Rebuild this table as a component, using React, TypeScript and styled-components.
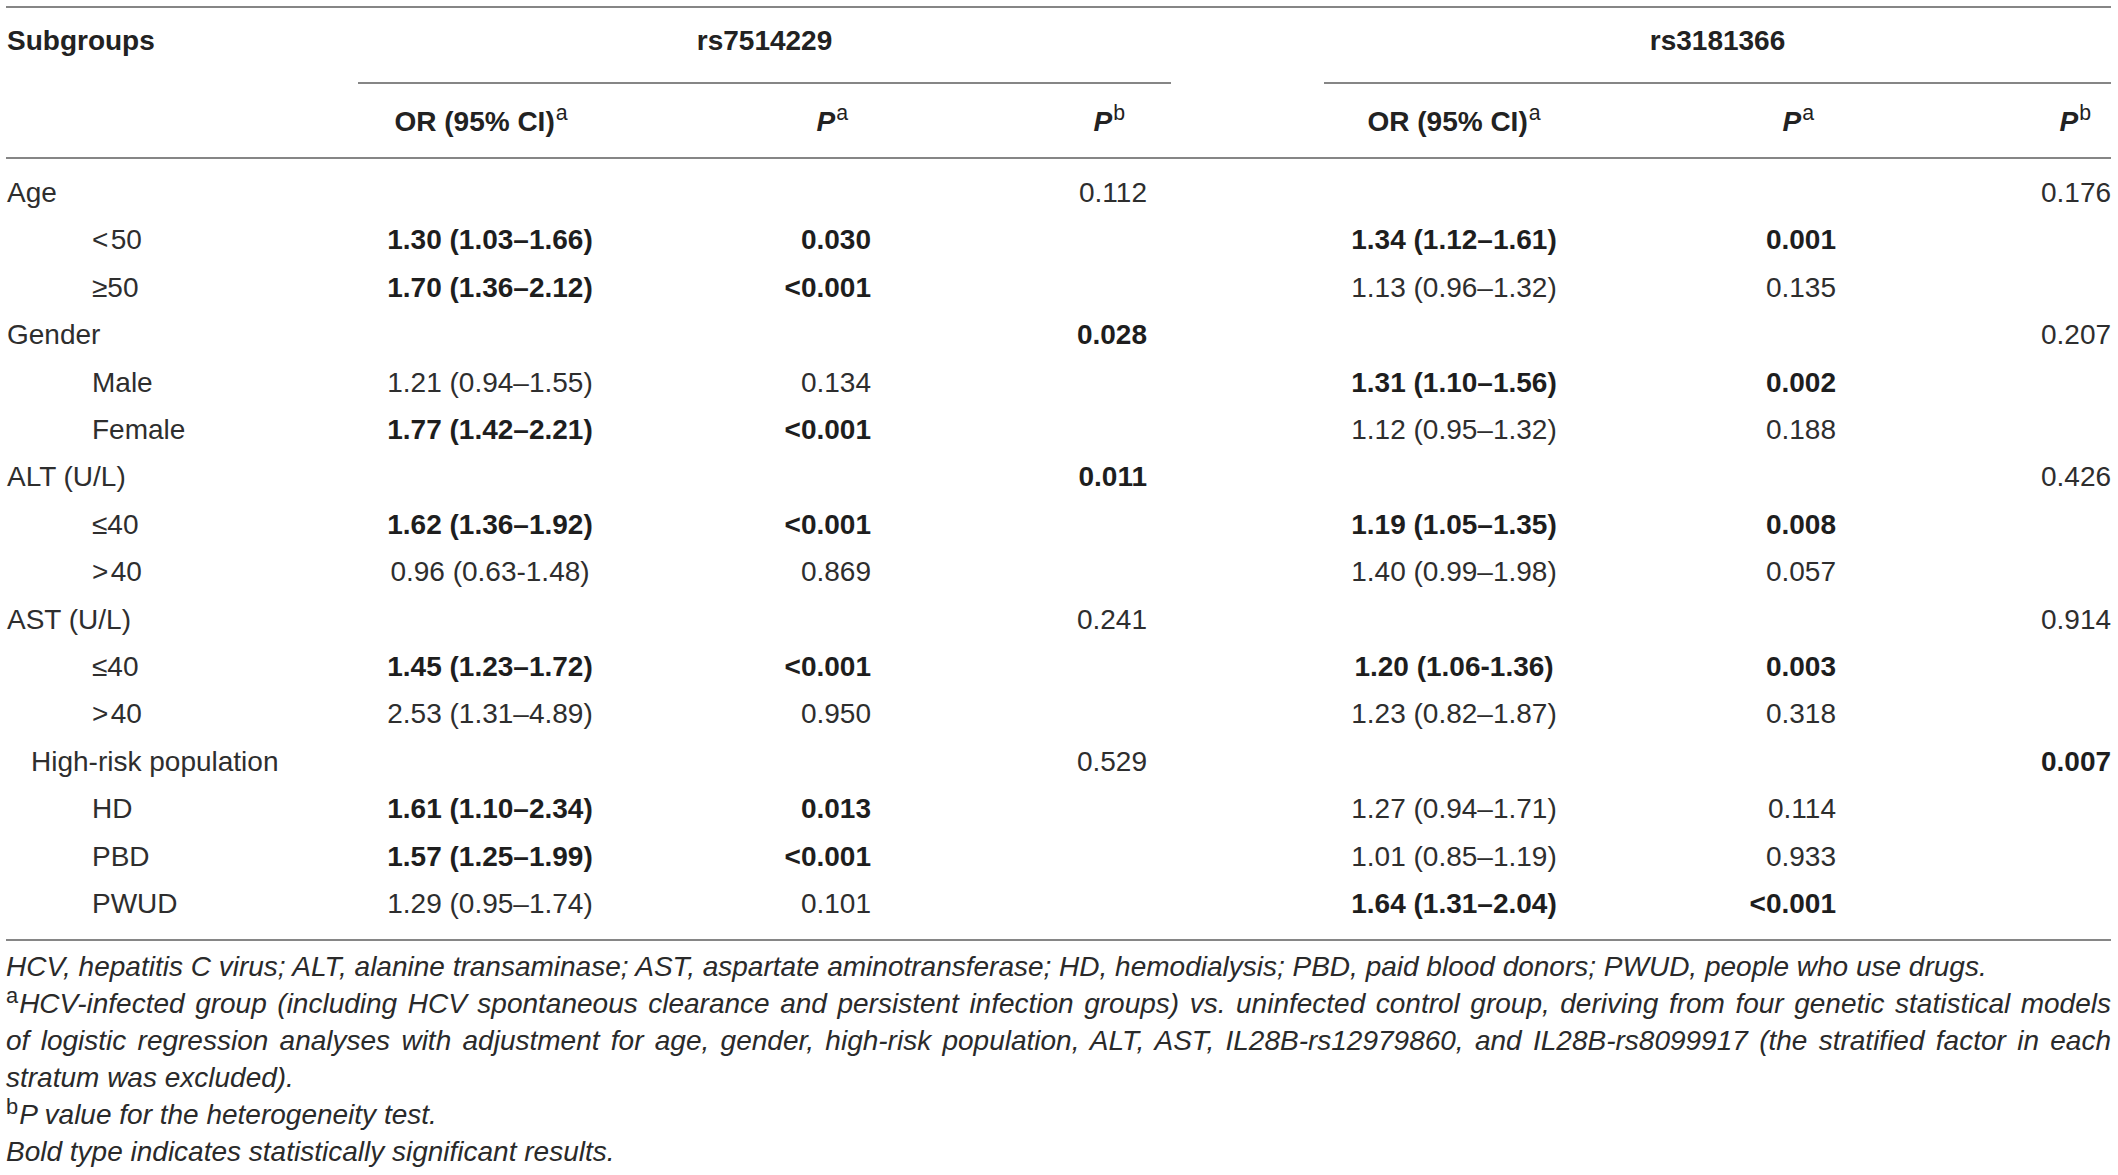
import React from "react";
import styled, { createGlobalStyle, css } from "styled-components";

const GlobalStyle = createGlobalStyle`
  html, body { margin: 0; padding: 0; background: #ffffff; }
  body { font-family: "Liberation Sans", Arial, Helvetica, sans-serif; color: #222222; }
`;

const RULE = "2px solid #868686";

const Page = styled.div`
  width: 2118px;
  box-sizing: border-box;
  padding: 6px 7px 0 6px;
`;

const Table = styled.table`
  width: 2105px;
  table-layout: fixed;
  border-collapse: separate;
  border-spacing: 0;
  border-top: ${RULE};
  font-size: 28px;
`;

type Align = "left" | "center" | "right";

const HeadCell = styled.th<{ $align?: Align; $pl?: number; $pr?: number; $rule?: boolean; $row: 1 | 2 }>`
  font-weight: 700;
  line-height: 34px;
  vertical-align: top;
  white-space: nowrap;
  color: #222222;
  text-align: ${(p) => p.$align ?? "left"};
  padding-left: ${(p) => p.$pl ?? 0}px;
  padding-right: ${(p) => p.$pr ?? 0}px;
  padding-top: ${(p) => (p.$row === 1 ? 16 : 21)}px;
  padding-bottom: ${(p) => (p.$row === 1 ? 24 : 18)}px;
  border-bottom: ${(p) => (p.$rule ? RULE : "none")};
`;

const ItalicP = styled.i`
  font-style: italic;
`;

const Sup = styled.sup`
  font-size: 0.76em;
  font-weight: 400;
  font-style: normal;
  line-height: 0;
  vertical-align: 0.5em;
  margin-left: 1px;
`;

const Body = styled.tbody`
  & > tr:first-child > td {
    padding-top: 10px;
  }
  & > tr:last-child > td {
    padding-bottom: 11px;
    border-bottom: ${RULE};
  }
`;

const DataCell = styled.td<{ $align?: Align; $pl?: number; $pr?: number; $bold?: boolean }>`
  line-height: 47.4px;
  padding: 0;
  white-space: nowrap;
  text-align: ${(p) => p.$align ?? "left"};
  padding-left: ${(p) => p.$pl ?? 0}px;
  padding-right: ${(p) => p.$pr ?? 0}px;
  ${(p) =>
    p.$bold
      ? css`
          font-weight: 700;
          color: #1e1e1e;
        `
      : css`
          font-weight: 400;
          color: #2e2e2e;
        `}
`;

const Notes = styled.div`
  margin-top: 7px;
  width: 2105px;
  font-size: 28px;
  line-height: 37px;
  font-style: italic;
  color: #2a2a2a;
`;

const NoteLine = styled.div<{ $justify?: boolean }>`
  white-space: nowrap;
  text-align: ${(p) => (p.$justify ? "justify" : "left")};
  text-align-last: ${(p) => (p.$justify ? "justify" : "left")};
`;

const NoteSup = styled.sup`
  font-size: 0.78em;
  font-style: normal;
  line-height: 0;
  vertical-align: 0.42em;
  margin-right: 1px;
`;

type V = { v: string; b?: boolean };
type Row = {
  label: string;
  indent: 0 | 1 | 2;
  or1?: V;
  pa1?: V;
  pb1?: V;
  or2?: V;
  pa2?: V;
  pb2?: V;
};

const B = (v: string): V => ({ v, b: true });
const R = (v: string): V => ({ v });

const rows: Row[] = [
  { label: "Age", indent: 0, pb1: R("0.112"), pb2: R("0.176") },
  { label: "<\u200a50", indent: 2, or1: B("1.30 (1.03–1.66)"), pa1: B("0.030"), or2: B("1.34 (1.12–1.61)"), pa2: B("0.001") },
  { label: "≥50", indent: 2, or1: B("1.70 (1.36–2.12)"), pa1: B("<0.001"), or2: R("1.13 (0.96–1.32)"), pa2: R("0.135") },
  { label: "Gender", indent: 0, pb1: B("0.028"), pb2: R("0.207") },
  { label: "Male", indent: 2, or1: R("1.21 (0.94–1.55)"), pa1: R("0.134"), or2: B("1.31 (1.10–1.56)"), pa2: B("0.002") },
  { label: "Female", indent: 2, or1: B("1.77 (1.42–2.21)"), pa1: B("<0.001"), or2: R("1.12 (0.95–1.32)"), pa2: R("0.188") },
  { label: "ALT (U/L)", indent: 0, pb1: B("0.011"), pb2: R("0.426") },
  { label: "≤40", indent: 2, or1: B("1.62 (1.36–1.92)"), pa1: B("<0.001"), or2: B("1.19 (1.05–1.35)"), pa2: B("0.008") },
  { label: ">\u200a40", indent: 2, or1: R("0.96 (0.63-1.48)"), pa1: R("0.869"), or2: R("1.40 (0.99–1.98)"), pa2: R("0.057") },
  { label: "AST (U/L)", indent: 0, pb1: R("0.241"), pb2: R("0.914") },
  { label: "≤40", indent: 2, or1: B("1.45 (1.23–1.72)"), pa1: B("<0.001"), or2: B("1.20 (1.06-1.36)"), pa2: B("0.003") },
  { label: ">\u200a40", indent: 2, or1: R("2.53 (1.31–4.89)"), pa1: R("0.950"), or2: R("1.23 (0.82–1.87)"), pa2: R("0.318") },
  { label: "High-risk population", indent: 1, pb1: R("0.529"), pb2: B("0.007") },
  { label: "HD", indent: 2, or1: B("1.61 (1.10–2.34)"), pa1: B("0.013"), or2: R("1.27 (0.94–1.71)"), pa2: R("0.114") },
  { label: "PBD", indent: 2, or1: B("1.57 (1.25–1.99)"), pa1: B("<0.001"), or2: R("1.01 (0.85–1.19)"), pa2: R("0.933") },
  { label: "PWUD", indent: 2, or1: R("1.29 (0.95–1.74)"), pa1: R("0.101"), or2: B("1.64 (1.31–2.04)"), pa2: B("<0.001") },
];

const indentPx = [1, 25, 86];
const colWidths = [352, 264, 263, 286, 153, 260, 266, 261];

export default function App() {
  return (
    <Page>
      <GlobalStyle />
      <Table>
        <colgroup>
          {colWidths.map((w, i) => (
            <col key={i} style={{ width: `${w}px` }} />
          ))}
        </colgroup>
        <thead>
          <tr>
            <HeadCell $row={1} rowSpan={2} $rule $pl={1}>
              Subgroups
            </HeadCell>
            <HeadCell $row={1} colSpan={3} $align="center" $rule>
              rs7514229
            </HeadCell>
            <HeadCell $row={1} rowSpan={2} $rule />
            <HeadCell $row={1} colSpan={3} $align="center" $rule>
              rs3181366
            </HeadCell>
          </tr>
          <tr>
            <HeadCell $row={2} $align="center" $pr={18} $rule>
              OR (95% CI)<Sup>a</Sup>
            </HeadCell>
            <HeadCell $row={2} $align="right" $pr={37} $rule>
              <ItalicP>P</ItalicP>
              <Sup>a</Sup>
            </HeadCell>
            <HeadCell $row={2} $align="right" $pr={46} $rule>
              <ItalicP>P</ItalicP>
              <Sup>b</Sup>
            </HeadCell>
            <HeadCell $row={2} $align="center" $rule>
              OR (95% CI)<Sup>a</Sup>
            </HeadCell>
            <HeadCell $row={2} $align="right" $pr={36} $rule>
              <ItalicP>P</ItalicP>
              <Sup>a</Sup>
            </HeadCell>
            <HeadCell $row={2} $align="right" $pr={20} $rule>
              <ItalicP>P</ItalicP>
              <Sup>b</Sup>
            </HeadCell>
          </tr>
        </thead>
        <Body>
          {rows.map((r, i) => (
            <tr key={i}>
              <DataCell $pl={indentPx[r.indent]}>{r.label}</DataCell>
              <DataCell $align="center" $bold={r.or1?.b}>{r.or1?.v ?? ""}</DataCell>
              <DataCell $align="right" $pr={14} $bold={r.pa1?.b}>{r.pa1?.v ?? ""}</DataCell>
              <DataCell $align="right" $pr={24} $bold={r.pb1?.b}>{r.pb1?.v ?? ""}</DataCell>
              <DataCell />
              <DataCell $align="center" $bold={r.or2?.b}>{r.or2?.v ?? ""}</DataCell>
              <DataCell $align="right" $pr={14} $bold={r.pa2?.b}>{r.pa2?.v ?? ""}</DataCell>
              <DataCell $align="right" $pr={0} $bold={r.pb2?.b}>{r.pb2?.v ?? ""}</DataCell>
            </tr>
          ))}
        </Body>
      </Table>
      <Notes>
        <NoteLine>
          HCV, hepatitis C virus; ALT, alanine transaminase; AST, aspartate aminotransferase; HD, hemodialysis; PBD,
          paid blood donors; PWUD, people who use drugs.
        </NoteLine>
        <NoteLine $justify>
          <NoteSup>a</NoteSup>HCV-infected group (including HCV spontaneous clearance and persistent infection groups) vs.
          uninfected control group, deriving from four genetic statistical models
        </NoteLine>
        <NoteLine $justify>
          of logistic regression analyses with adjustment for age, gender, high-risk population, ALT, AST,
          IL28B-rs12979860, and IL28B-rs8099917 (the stratified factor in each
        </NoteLine>
        <NoteLine>stratum was excluded).</NoteLine>
        <NoteLine>
          <NoteSup>b</NoteSup>P value for the heterogeneity test.
        </NoteLine>
        <NoteLine>Bold type indicates statistically significant results.</NoteLine>
      </Notes>
    </Page>
  );
}
